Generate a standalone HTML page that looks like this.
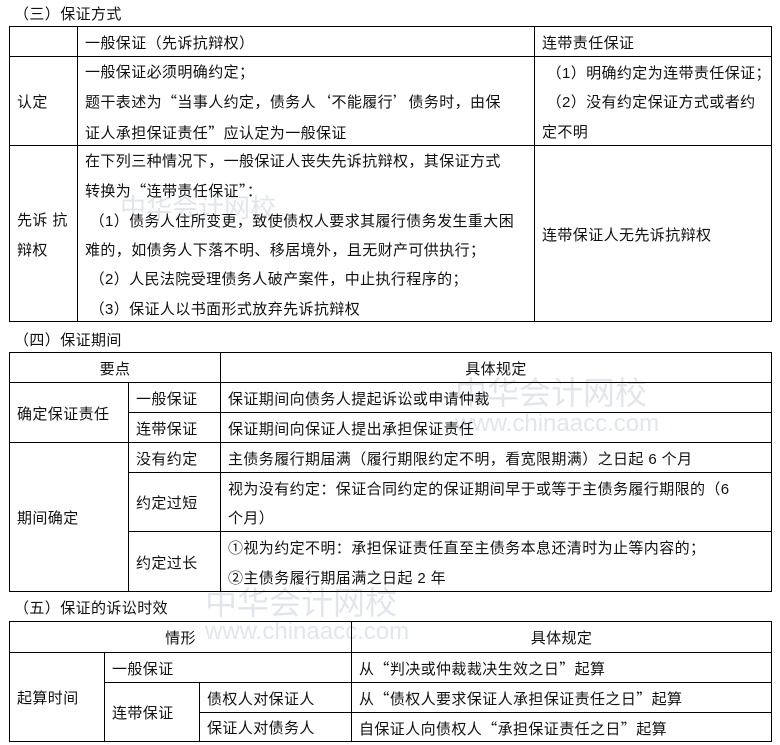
<!DOCTYPE html>
<html><head><meta charset="utf-8"><style>
body{margin:0;width:780px;height:745px;background:#fff;position:relative;overflow:hidden;font-family:"Liberation Sans","Noto Sans CJK SC",sans-serif;font-size:15px;color:#111;letter-spacing:0.4px}
.c{position:absolute;box-sizing:border-box;border:1px solid #000;display:flex;flex-direction:column;justify-content:center;padding-left:7px;padding-top:4px;line-height:29.4px;white-space:nowrap}
.m{align-items:center;padding-left:0}
.t{position:absolute;left:14px;line-height:20px}
.q{font-family:"Noto Sans CJK SC",sans-serif}
.w{position:absolute;color:#c4cedc;opacity:.5;white-space:nowrap;pointer-events:none;letter-spacing:0}
</style></head><body>
<div class="w" style="left:120px;top:188px;font-size:26px">中华会计网校</div>
<div class="w" style="left:455px;top:368px;font-size:32px">中华会计网校</div>
<div class="w" style="left:455px;top:410px;font-size:24px">www.chinaacc.com</div>
<div class="w" style="left:205px;top:578px;font-size:32px">中华会计网校</div>
<div class="w" style="left:205px;top:618px;font-size:24px">www.chinaacc.com</div>

<div class="t" style="top:5px">（三）保证方式</div>
<div class="c" style="left:9px;top:26px;width:69px;height:31px"></div>
<div class="c" style="left:77px;top:26px;width:458px;height:31px">一般保证（先诉抗辩权）</div>
<div class="c" style="left:534px;top:26px;width:238px;height:31px">连带责任保证</div>
<div class="c" style="left:9px;top:56px;width:69px;height:90px">认定</div>
<div class="c" style="left:77px;top:56px;width:458px;height:90px"><div>一般保证必须明确约定；</div><div>题干表述为<span class="q">“</span>当事人约定，债务人<span class="q">‘</span>不能履行<span class="q">’</span>债务时，由保</div><div>证人承担保证责任<span class="q">”</span>应认定为一般保证</div></div>
<div class="c" style="left:534px;top:56px;width:238px;height:90px"><div>&nbsp;（1）明确约定为连带责任保证；</div><div>&nbsp;（2）没有约定保证方式或者约</div><div>定不明</div></div>
<div class="c" style="left:9px;top:145px;width:69px;height:177px"><div>先诉 抗</div><div>辩权</div></div>
<div class="c" style="left:77px;top:145px;width:458px;height:177px"><div>在下列三种情况下，一般保证人丧失先诉抗辩权，其保证方式</div><div>转换为<span class="q">“</span>连带责任保证<span class="q">”</span>：</div><div>&nbsp;（1）债务人住所变更，致使债权人要求其履行债务发生重大困</div><div>难的，如债务人下落不明、移居境外，且无财产可供执行；</div><div>&nbsp;（2）人民法院受理债务人破产案件，中止执行程序的；</div><div>&nbsp;（3）保证人以书面形式放弃先诉抗辩权</div></div>
<div class="c" style="left:534px;top:145px;width:238px;height:177px">连带保证人无先诉抗辩权</div>

<div class="t" style="top:331px">（四）保证期间</div>
<div class="c m" style="left:9px;top:352px;width:212px;height:31px">要点</div>
<div class="c m" style="left:220px;top:352px;width:552px;height:31px">具体规定</div>
<div class="c" style="left:9px;top:382px;width:120px;height:61px">确定保证责任</div>
<div class="c" style="left:128px;top:382px;width:93px;height:31px">一般保证</div>
<div class="c" style="left:220px;top:382px;width:552px;height:31px">保证期间向债务人提起诉讼或申请仲裁</div>
<div class="c" style="left:128px;top:412px;width:93px;height:31px">连带保证</div>
<div class="c" style="left:220px;top:412px;width:552px;height:31px">保证期间向保证人提出承担保证责任</div>
<div class="c" style="left:9px;top:442px;width:120px;height:150px">期间确定</div>
<div class="c" style="left:128px;top:442px;width:93px;height:31px">没有约定</div>
<div class="c" style="left:220px;top:442px;width:552px;height:31px">主债务履行期届满（履行期限约定不明，看宽限期满）之日起 6 个月</div>
<div class="c" style="left:128px;top:472px;width:93px;height:60px">约定过短</div>
<div class="c" style="left:220px;top:472px;width:552px;height:60px"><div>视为没有约定：保证合同约定的保证期间早于或等于主债务履行期限的（6</div><div>个月）</div></div>
<div class="c" style="left:128px;top:531px;width:93px;height:61px">约定过长</div>
<div class="c" style="left:220px;top:531px;width:552px;height:61px"><div>①视为约定不明：承担保证责任直至主债务本息还清时为止等内容的；</div><div>②主债务履行期届满之日起 2 年</div></div>

<div class="t" style="top:599px">（五）保证的诉讼时效</div>
<div class="c m" style="left:9px;top:621px;width:343px;height:32px">情形</div>
<div class="c m" style="left:351px;top:621px;width:421px;height:32px">具体规定</div>
<div class="c" style="left:9px;top:652px;width:96px;height:90px">起算时间</div>
<div class="c" style="left:104px;top:652px;width:248px;height:31px">一般保证</div>
<div class="c" style="left:351px;top:652px;width:421px;height:31px"><div>从<span class="q">“</span>判决或仲裁裁决生效之日<span class="q">”</span>起算</div></div>
<div class="c" style="left:104px;top:682px;width:96px;height:60px">连带保证</div>
<div class="c" style="left:199px;top:682px;width:153px;height:31px">债权人对保证人</div>
<div class="c" style="left:351px;top:682px;width:421px;height:31px"><div>从<span class="q">“</span>债权人要求保证人承担保证责任之日<span class="q">”</span>起算</div></div>
<div class="c" style="left:199px;top:712px;width:153px;height:30px">保证人对债务人</div>
<div class="c" style="left:351px;top:712px;width:421px;height:30px"><div>自保证人向债权人<span class="q">“</span>承担保证责任之日<span class="q">”</span>起算</div></div>
</body></html>
